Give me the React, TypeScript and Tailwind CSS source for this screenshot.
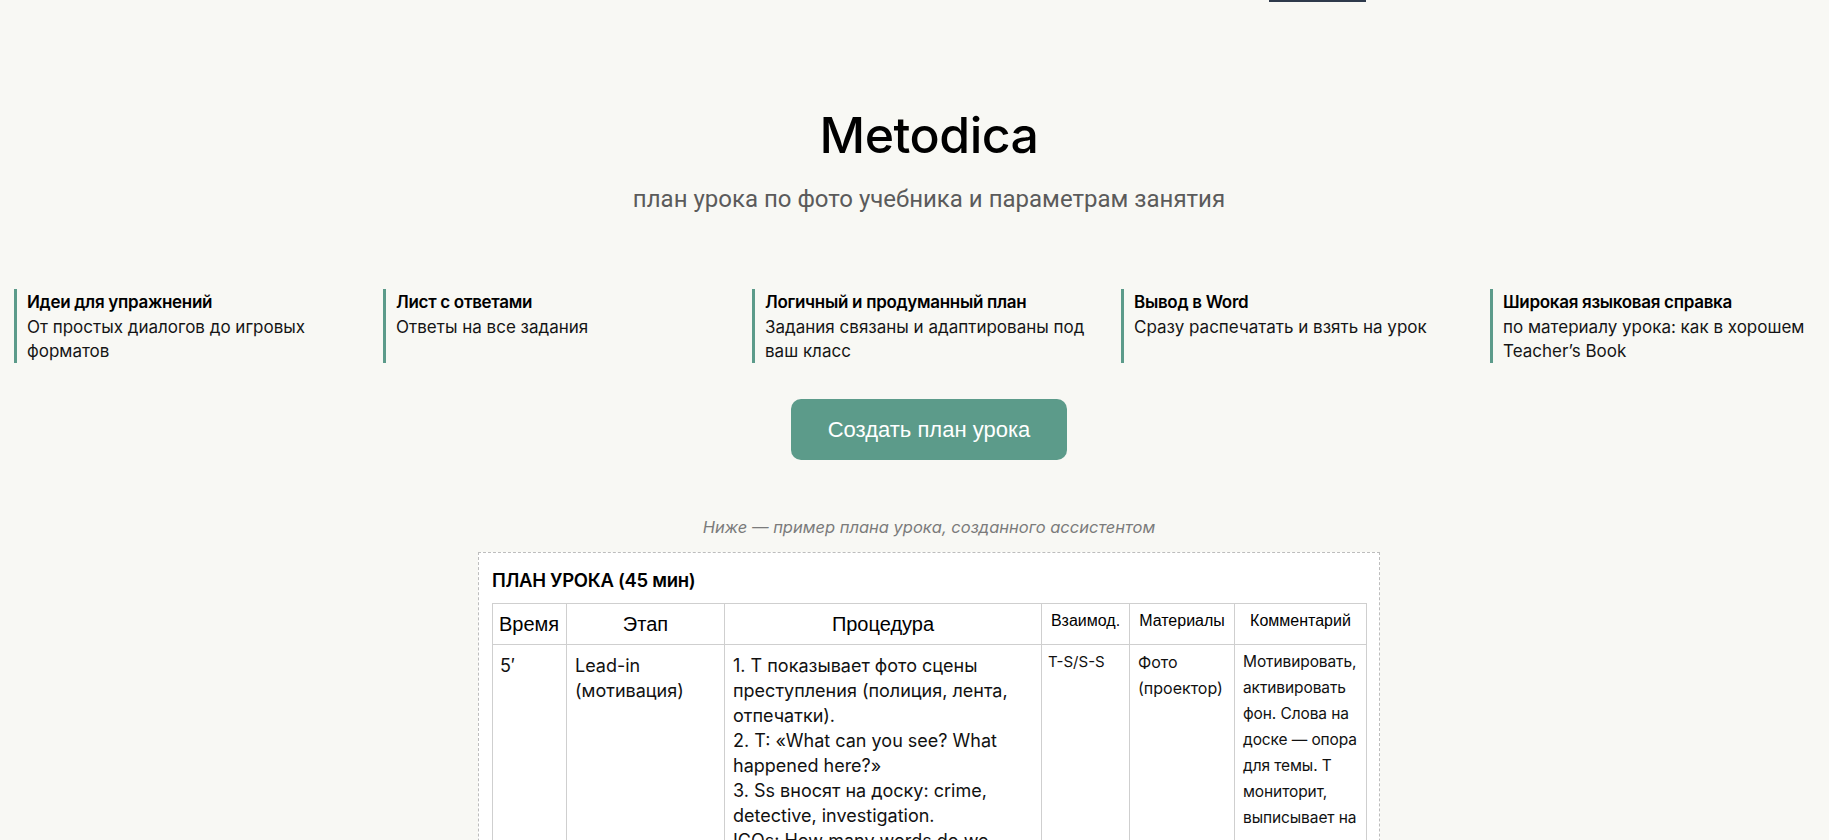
import React from "react";

interface Feature {
  title: string;
  text: string;
}

const features: Feature[] = [
  { title: "Идеи для упражнений", text: "От простых диалогов до игровых форматов" },
  { title: "Лист с ответами", text: "Ответы на все задания" },
  { title: "Логичный и продуманный план", text: "Задания связаны и адаптированы под ваш класс" },
  { title: "Вывод в Word", text: "Сразу распечатать и взять на урок" },
  { title: "Широкая языковая справка", text: "по материалу урока: как в хорошем Teacher’s Book" },
];

const App: React.FC = () => {
  return (
    <div className="min-h-screen bg-[#f8f8f4] font-['Inter',sans-serif] text-black">
      {/* scrolled-off nav underline */}
      <div className="ml-[1269px] h-[2px] w-[97px] bg-[#2e3a4b]" />

      <div className="flex flex-col items-center pl-[29px]">
        <h1 className="mt-[105px] text-[50px] font-medium leading-[56px] tracking-[-0.5px]">Metodica</h1>
        <p className="mt-[22px] font-['Roboto',sans-serif] text-[24px] leading-[28px] text-[#5b5b5b]">
          план урока по фото учебника и параметрам занятия
        </p>
      </div>

      <div className="mt-[76px] grid grid-cols-5 gap-[30px] pl-[14px]">
        {features.map((f) => (
          <div key={f.title} className="h-[74px] border-l-[3px] border-[#5c9b8a] pl-[10px]">
            <div className="pt-px text-[17px] font-semibold leading-[25px] tracking-[-0.3px]">{f.title}</div>
            <div className="text-[17px] leading-[24px] text-[#151515]">{f.text}</div>
          </div>
        ))}
      </div>

      <div className="flex flex-col items-center pl-[29px]">
        <button className="mt-[36px] flex h-[61px] w-[276px] items-center justify-center rounded-[10px] bg-[#5c9b8a] font-['Liberation_Sans',Arial,sans-serif] text-[22px] text-white">
          Создать план урока
        </button>

        <p className="mt-[55px] text-[16.5px] italic leading-[24px] text-[#7b7b7b]">
          Ниже — пример плана урока, созданного ассистентом
        </p>

        <div className="mt-[13px] w-[902px] border border-dashed border-[#bdbdbd] bg-white px-[13px] pt-[15px] pb-6">
          <div className="text-[18.5px] font-semibold leading-[24px] tracking-[-0.3px]">ПЛАН УРОКА (45 мин)</div>
          <table className="mt-[11px] w-[874px] table-fixed border-collapse text-[#111]">
            <colgroup>
              <col className="w-[74px]" />
              <col className="w-[158px]" />
              <col className="w-[317px]" />
              <col className="w-[88px]" />
              <col className="w-[105px]" />
              <col className="w-[132px]" />
            </colgroup>
            <thead className="font-['Liberation_Sans',Arial,sans-serif] font-normal text-black">
              <tr>
                <th className="border border-[#cfcfcf] px-[6px] pt-[8px] pb-[8px] text-left align-top text-[20px] font-normal leading-[24px]">Время</th>
                <th className="border border-[#cfcfcf] px-2 pt-[8px] pb-[8px] text-center align-top text-[20px] font-normal leading-[24px]">Этап</th>
                <th className="border border-[#cfcfcf] px-2 pt-[8px] pb-[8px] text-center align-top text-[20px] font-normal leading-[24px]">Процедура</th>
                <th className="border border-[#cfcfcf] px-[5px] pt-[7px] text-center align-top text-[16px] font-normal leading-[20px]">Взаимод.</th>
                <th className="border border-[#cfcfcf] px-[5px] pt-[7px] text-center align-top text-[16px] font-normal leading-[20px]">Материалы</th>
                <th className="border border-[#cfcfcf] px-[5px] pt-[7px] text-center align-top text-[16px] font-normal leading-[20px]">Комментарий</th>
              </tr>
            </thead>
            <tbody>
              <tr>
                <td className="border border-[#cfcfcf] px-[7px] pt-[8px] pb-2 align-top text-[18px] leading-[25px]">5′</td>
                <td className="border border-[#cfcfcf] px-[8px] pt-[8px] pb-2 align-top text-[18px] leading-[25px]">
                  Lead-in (мотивация)
                </td>
                <td className="border border-[#cfcfcf] px-[8px] pt-[8px] pb-2 align-top text-[18px] leading-[25px]">
                  1. Т показывает фото сцены преступления (полиция, лента, отпечатки).
                  <br />
                  2. T: «What can you see? What happened here?»
                  <br />
                  3. Ss вносят на доску: crime, detective, investigation.
                  <br />
                  ICQs: How many words do we need? Who writes?
                </td>
                <td className="border border-[#cfcfcf] px-[6px] pt-[4px] pb-2 align-top text-[15px] leading-[26px]">T-S/S-S</td>
                <td className="border border-[#cfcfcf] px-[8px] pt-[4px] pb-2 align-top text-[16px] leading-[26px]">
                  Фото (проектор)
                </td>
                <td className="border border-[#cfcfcf] pl-[8px] pr-[3px] pt-[4px] pb-2 align-top text-[15.5px] leading-[26px] tracking-[-0.1px]">
                  Мотивировать, активировать фон. Слова на доске — опора для темы. Т мониторит, выписывает на доску новую лексику.
                </td>
              </tr>
            </tbody>
          </table>
        </div>
      </div>
    </div>
  );
};

export default App;
